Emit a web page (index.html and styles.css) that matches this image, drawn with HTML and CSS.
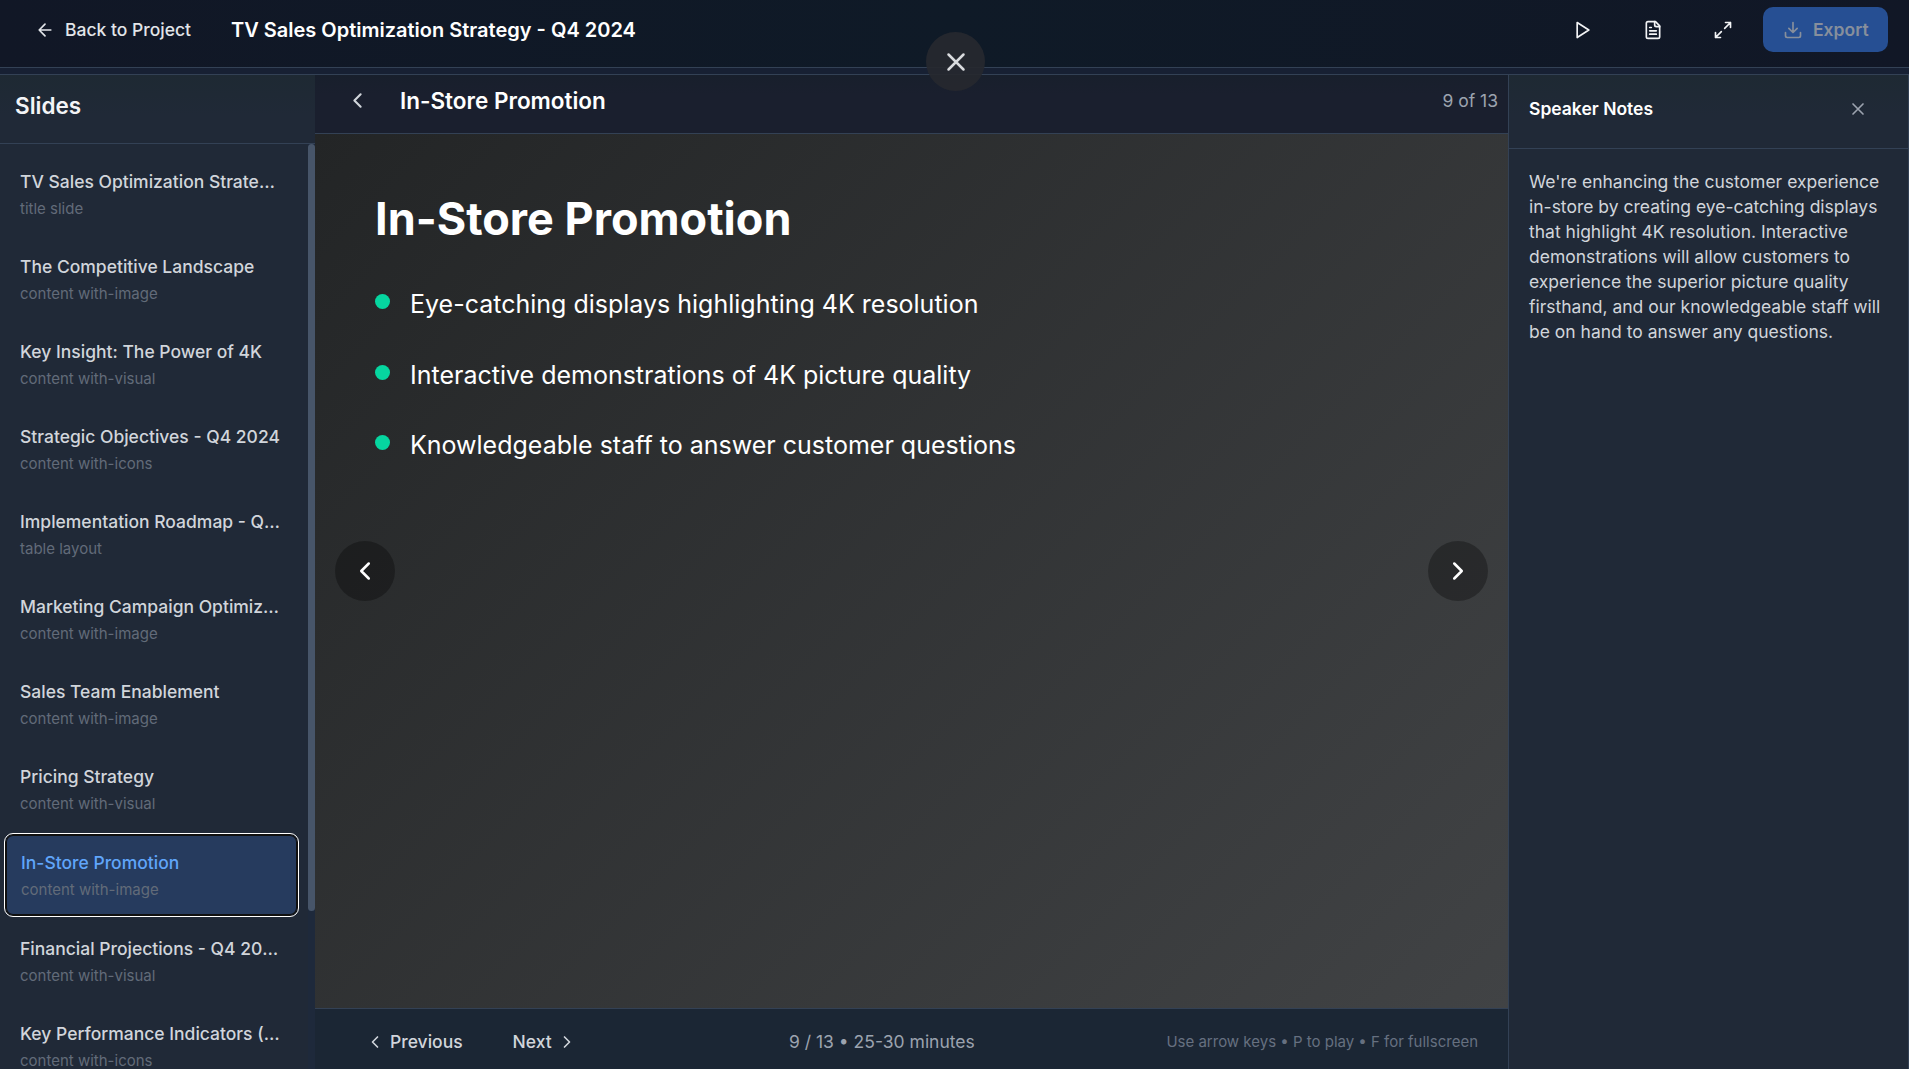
FILE: index.html
```
<!DOCTYPE html>
<html lang="en">
<head>
  <meta charset="UTF-8">
  <meta name="viewport" content="width=device-width, initial-scale=1.0">
  <title>TV Sales Optimization Strategy - Q4 2024</title>
  <link rel="stylesheet" href="styles.css">
</head>
<body>

  <div class="viewer">
    <header class="topbar">
      <button class="back">
        <svg class="icon" viewBox="0 0 24 24"><path d="M12 19l-7-7 7-7M19 12H5"/></svg>
        Back to Project
      </button>
      <h1 class="deck-title">TV Sales Optimization Strategy - Q4 2024</h1>
      <div class="actions">
        <button class="icon-btn" aria-label="Play">
          <svg class="icon" viewBox="0 0 24 24"><path d="M5 3l14 9-14 9z"/></svg>
        </button>
        <button class="icon-btn" aria-label="Notes">
          <svg class="icon" viewBox="0 0 24 24"><path d="M15 2H6a2 2 0 0 0-2 2v16a2 2 0 0 0 2 2h12a2 2 0 0 0 2-2V7z"/><path d="M14 2v4a2 2 0 0 0 2 2h4M10 9H8M16 13H8M16 17H8"/></svg>
        </button>
        <button class="icon-btn" aria-label="Fullscreen">
          <svg class="icon" viewBox="0 0 24 24"><path d="M15 3h6v6M9 21H3v-6M21 3l-7 7M3 21l7-7"/></svg>
        </button>
        <button class="export" disabled>
          <svg class="icon" viewBox="0 0 24 24"><path d="M21 15v4a2 2 0 0 1-2 2H5a2 2 0 0 1-2-2v-4M7 10l5 5 5-5M12 15V3"/></svg>
          Export
        </button>
      </div>
    </header>

    <div class="workspace">
      <aside class="sidebar">
        <h2 class="sidebar-head">Slides</h2>
        <div class="slide-scroll">
          <ul class="slide-list">
            <li class="slide-item">
              <div class="slide-name">TV Sales Optimization Strategy - Q4 2024</div>
              <div class="slide-type">title slide</div>
            </li>
            <li class="slide-item">
              <div class="slide-name">The Competitive Landscape</div>
              <div class="slide-type">content with-image</div>
            </li>
            <li class="slide-item">
              <div class="slide-name">Key Insight: The Power of 4K</div>
              <div class="slide-type">content with-visual</div>
            </li>
            <li class="slide-item">
              <div class="slide-name">Strategic Objectives - Q4 2024</div>
              <div class="slide-type">content with-icons</div>
            </li>
            <li class="slide-item">
              <div class="slide-name">Implementation Roadmap - Q4 2024</div>
              <div class="slide-type">table layout</div>
            </li>
            <li class="slide-item">
              <div class="slide-name">Marketing Campaign Optimization</div>
              <div class="slide-type">content with-image</div>
            </li>
            <li class="slide-item">
              <div class="slide-name">Sales Team Enablement</div>
              <div class="slide-type">content with-image</div>
            </li>
            <li class="slide-item">
              <div class="slide-name">Pricing Strategy</div>
              <div class="slide-type">content with-visual</div>
            </li>
            <li class="slide-item active">
              <div class="slide-name">In-Store Promotion</div>
              <div class="slide-type">content with-image</div>
            </li>
            <li class="slide-item">
              <div class="slide-name">Financial Projections - Q4 2024</div>
              <div class="slide-type">content with-visual</div>
            </li>
            <li class="slide-item">
              <div class="slide-name">Key Performance Indicators (KPIs)</div>
              <div class="slide-type">content with-icons</div>
            </li>
          </ul>
          <div class="scroll-track"><div class="scroll-thumb"></div></div>
        </div>
      </aside>

      <main class="stage">
        <div class="stage-head">
          <svg class="icon icon-md" viewBox="0 0 24 24"><path d="M15 18l-6-6 6-6"/></svg>
          <h2 class="stage-title">In-Store Promotion</h2>
          <span class="counter">9 of 13</span>
        </div>

        <section class="slide">
          <h3 class="slide-heading">In-Store Promotion</h3>
          <ul class="bullets">
            <li>Eye-catching displays highlighting 4K resolution</li>
            <li>Interactive demonstrations of 4K picture quality</li>
            <li>Knowledgeable staff to answer customer questions</li>
          </ul>
          <button class="nav nav-prev" aria-label="Previous slide">
            <svg class="icon icon-lg" viewBox="0 0 24 24"><path d="M15 18l-6-6 6-6"/></svg>
          </button>
          <button class="nav nav-next" aria-label="Next slide">
            <svg class="icon icon-lg" viewBox="0 0 24 24"><path d="M9 18l6-6-6-6"/></svg>
          </button>
        </section>

        <footer class="stage-foot">
          <div class="pager">
            <button class="pager-btn">
              <svg class="icon" viewBox="0 0 24 24"><path d="M15 18l-6-6 6-6"/></svg>
              Previous
            </button>
            <button class="pager-btn">
              Next
              <svg class="icon" viewBox="0 0 24 24"><path d="M9 18l6-6-6-6"/></svg>
            </button>
          </div>
          <div class="progress">9 / 13 • 25-30 minutes</div>
          <div class="hint">Use arrow keys • P to play • F for fullscreen</div>
        </footer>
      </main>

      <aside class="notes">
        <div class="notes-head">
          <h2 class="notes-title">Speaker Notes</h2>
          <svg class="icon" viewBox="0 0 24 24"><path d="M18 6L6 18M6 6l12 12"/></svg>
        </div>
        <p class="notes-text">We're enhancing the customer experience in-store by creating eye-catching displays that highlight 4K resolution. Interactive demonstrations will allow customers to experience the superior picture quality firsthand, and our knowledgeable staff will be on hand to answer any questions.</p>
      </aside>
    </div>

    <button class="close" aria-label="Close">
      <svg class="icon icon-lg" viewBox="0 0 24 24"><path d="M18 6L6 18M6 6l12 12"/></svg>
    </button>
  </div>

</body>
</html>
```
FILE: styles.css
```
* {
  margin: 0;
  padding: 0;
  box-sizing: border-box;
}

body {
  font-family: Inter, "Liberation Sans", sans-serif;
  font-size: 17.5px;
  color: #d1d5db;
  background: #172033;
  overflow: hidden;
}

button {
  border: none;
  background: none;
  font: inherit;
  color: inherit;
}

ul {
  list-style: none;
}

.icon {
  width: 20px;
  height: 20px;
  flex: none;
  fill: none;
  stroke: currentColor;
  stroke-width: 2;
  stroke-linecap: round;
  stroke-linejoin: round;
}

.icon-md {
  width: 25px;
  height: 25px;
}

.icon-lg {
  width: 30px;
  height: 30px;
}

.viewer {
  position: relative;
  display: flex;
  flex-direction: column;
  height: 100vh;
}

/* top bar */
.topbar {
  display: flex;
  align-items: center;
  height: 68px;
  padding: 0 21px 8px 15px;
  border-bottom: 1px solid #334155;
  background: linear-gradient(90deg, #111726, #0f1a27 50%, #111726);
}

.back {
  display: flex;
  align-items: center;
  gap: 10px;
  padding: 0 20px;
  font-weight: 500;
  color: #e2e5e9;
}

.deck-title {
  margin-left: 20px;
  font-size: 20px;
  font-weight: 600;
  color: #fff;
}

.actions {
  display: flex;
  gap: 10px;
  margin-left: auto;
}

.icon-btn {
  display: flex;
  align-items: center;
  justify-content: center;
  width: 60px;
  color: #f3f4f6;
}

.export {
  display: flex;
  align-items: center;
  gap: 10px;
  width: 125px;
  height: 45px;
  padding: 0 20px;
  border-radius: 10px;
  background: #264f93;
  font-weight: 600;
  color: #878f9c;
}

/* columns */
.workspace {
  display: flex;
  flex: 1;
  min-height: 0;
  margin-top: 6px;
  border-top: 1px solid #334155;
}

.sidebar {
  display: flex;
  flex-direction: column;
  width: 315px;
  background: linear-gradient(#1e2933, #202937 40px);
}

.sidebar-head {
  height: 69px;
  padding: 0 15px 6px;
  border-bottom: 1px solid #334155;
  font-size: 22.5px;
  font-weight: 600;
  line-height: 62px;
  color: #f3f4f6;
}

.slide-scroll {
  display: flex;
  flex: 1;
  min-height: 0;
}

.slide-list {
  width: 308px;
  padding: 10px 10px 0 5px;
}

.slide-item {
  padding: 14.5px 15px 13.25px;
  margin-bottom: 5px;
  border-radius: 8px;
}

.slide-name {
  overflow: hidden;
  font-weight: 500;
  line-height: 26px;
  text-overflow: ellipsis;
  white-space: nowrap;
}

.slide-type {
  margin-top: 3.75px;
  font-size: 15px;
  line-height: 22.5px;
  color: #626b79;
}

.slide-item.active {
  border: 1px solid #101010;
  outline: 1px solid #fff;
  background: #263b5e;
  box-shadow: inset 0 0 0 1px #101010;
}

.slide-item.active .slide-name {
  color: #60a5fa;
}

.scroll-track {
  width: 7px;
  background: #1e293b;
}

.scroll-thumb {
  height: 767px;
  border-radius: 4px;
  background: #475569;
}

/* stage */
.stage {
  display: flex;
  flex: 1;
  flex-direction: column;
  min-width: 0;
}

.stage-head {
  display: flex;
  align-items: center;
  height: 59px;
  padding: 0 10px 7px 30px;
  border-bottom: 1px solid #334155;
  background: linear-gradient(#181f2c, #1a1f2e 20px);
}

.stage-title {
  margin-left: 30px;
  font-size: 22.5px;
  font-weight: 600;
  color: #fff;
}

.counter {
  margin-left: auto;
  color: #9ca3af;
}

.slide {
  position: relative;
  flex: 1;
  padding: 58px 60px;
  background: linear-gradient(135deg, #232526, #414345);
  color: #fff;
}

.slide-heading {
  font-size: 45px;
  font-weight: 700;
  line-height: 54px;
}

.bullets {
  display: flex;
  flex-direction: column;
  gap: 30.5px;
  margin-top: 38px;
}

.bullets li {
  display: flex;
  gap: 20px;
  font-size: 25px;
  line-height: 40px;
}

.bullets li::before {
  content: "";
  width: 15px;
  height: 15px;
  margin-top: 10px;
  border-radius: 50%;
  background: #06d6a0;
}

.nav {
  position: absolute;
  top: 407px;
  display: flex;
  align-items: center;
  justify-content: center;
  width: 60px;
  height: 60px;
  border-radius: 50%;
  background: rgba(0, 0, 0, 0.3);
  color: #fff;
}

.nav-prev {
  left: 20px;
}

.nav-next {
  right: 20px;
}

.stage-foot {
  display: grid;
  grid-template-columns: 414px 1fr auto;
  align-items: center;
  height: 61px;
  padding: 5px 30px 0 50px;
  border-top: 1px solid #334155;
  background: #1b2634;
}

.pager {
  display: flex;
  gap: 50px;
}

.pager-btn {
  display: flex;
  align-items: center;
  gap: 5px;
  font-weight: 500;
}

.progress {
  padding-left: 10px;
  color: #9ca3af;
}

.hint {
  font-size: 15px;
  color: #667080;
}

/* speaker notes */
.notes {
  width: 401px;
  border-right: 1px solid #334155;
  border-left: 1px solid #334155;
  background: linear-gradient(#1e2933, #202937 40px);
}

.notes-head {
  display: flex;
  align-items: center;
  justify-content: space-between;
  height: 74px;
  padding: 0 40px 6px 20px;
  border-bottom: 1px solid #334155;
  color: #9ca3af;
}

.notes-title {
  font-size: 17.5px;
  font-weight: 600;
  color: #fff;
}

.notes-text {
  padding: 20px;
  line-height: 25px;
}

/* floating close button over the header edge */
.close {
  position: absolute;
  top: 32px;
  left: 926px;
  display: flex;
  align-items: center;
  justify-content: center;
  width: 59px;
  height: 59px;
  border-radius: 50%;
  background: rgba(38, 40, 47, 0.92);
  color: #d9dbde;
}
```
